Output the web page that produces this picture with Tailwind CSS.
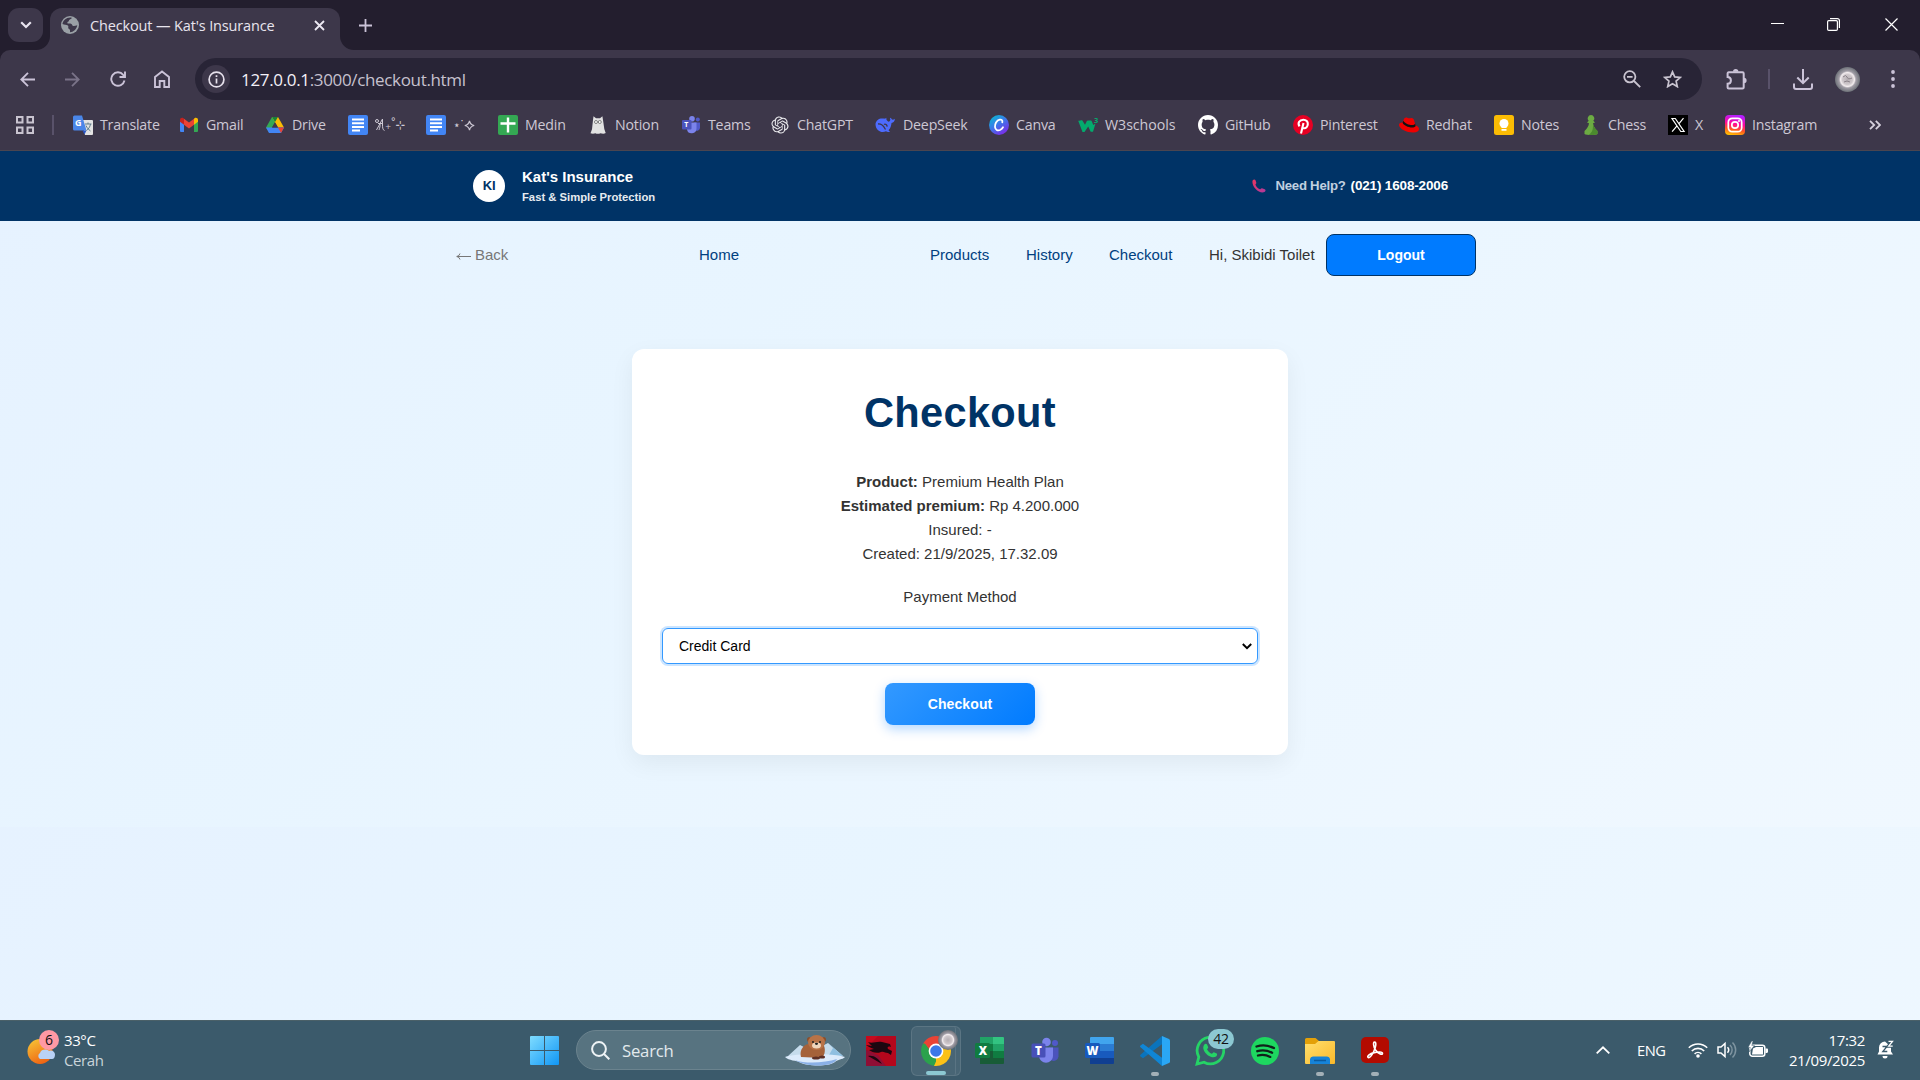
<!DOCTYPE html>
<html lang="en">
<head>
<meta charset="utf-8">
<title>Checkout — Kat's Insurance</title>
<script src="https://cdn.jsdelivr.net/npm/@tailwindcss/browser@4"></script>
</head>
<body class="w-[1920px] h-[1080px] overflow-hidden flex flex-col bg-[#231e2e] font-['Open_Sans',sans-serif]">

<!-- Tab strip -->
<div class="h-[50px] shrink-0 flex items-start pt-2 pl-2">
  <div class="w-[35px] h-[34px] rounded-[11px] bg-[#3d374a] flex items-center justify-center">
    <svg class="w-[12px] h-[8px]" viewBox="0 0 12 8" fill="none" stroke="#e9e4f0" stroke-width="2.2"><path d="M1.2 1.2 6 6l4.8-4.8"/></svg>
  </div>
  <div class="relative ml-[7px] w-[290px] h-[42px] rounded-t-[12px] bg-[#3d374a] flex items-center pb-2 pl-[11px]">
    <svg class="absolute -left-[14px] bottom-0 w-[14px] h-[14px]" viewBox="0 0 14 14"><path d="M14 0v14H0A14 14 0 0 0 14 0Z" fill="#3d374a"/></svg>
    <svg class="absolute -right-[14px] bottom-0 w-[14px] h-[14px]" viewBox="0 0 14 14"><path d="M0 0v14h14A14 14 0 0 1 0 0Z" fill="#3d374a"/></svg>
    <svg class="w-[18px] h-[18px] shrink-0" viewBox="0 0 18 18"><circle cx="9" cy="9" r="9" fill="#9aa0a6"/><path d="M10.500 1.600c.5 1.300-.8 1.900-1.900 2.100-.9.200-.3 1.500-1.200 1.900-.7.300-1.200.8-.9 1.600.3.700 2.700 0 3.900.7 1 .5.700 1.900 2 2.100 1 .2 2.300-.3 3.900-.7-.7 4.300-4 6.700-7.300 7v-2.200c0-1-1.400-.9-1.700-1.900-.3-1.300.5-2-.5-2.800C5.500 8.600 3.200 8.800 1.500 7.900 2 4.500 5.500 1 10.500 1.600Z" fill="#3d374a"/><path d="M9.400 3.800c1.600.3 3.400.6 3.500 2.200.1 1.200 1.700 1 2.900 1.300" stroke="#9aa0a6" stroke-width="1" fill="none"/></svg>
    <span class="ml-[11px] pt-px w-[222px] text-[14.500px] tracking-[-0.140px] text-[#e8e4ee] whitespace-nowrap">Checkout — Kat's Insurance</span>
    <svg class="w-[11px] h-[11px] shrink-0 ml-[2px]" viewBox="0 0 11 11" stroke="#ece8f2" stroke-width="1.800"><path d="m1 1 9 9M10 1l-9 9"/></svg>
  </div>
  <svg class="w-[13px] h-[13px] mt-[10.500px] ml-[19px]" viewBox="0 0 13 13" stroke="#cbc3d8" stroke-width="1.800"><path d="M6.500 0v13M0 6.500h13"/></svg>
  <div class="ml-auto flex items-center h-[33px]">
    <svg class="w-[13px] h-[13px]" viewBox="0 0 13 13"><path d="M0 5.500h13" stroke="#fff"/></svg>
    <svg class="w-[13px] h-[13px] ml-[43px]" viewBox="0 0 13 13" fill="none" stroke="#fff" stroke-width="1.200"><rect x=".6" y="2.600" width="9.800" height="9.800" rx="1.200"/><path d="M3 .6h7.400a2 2 0 0 1 2 2V10"/></svg>
    <svg class="w-[13px] h-[13px] ml-[45px] mr-[22px]" viewBox="0 0 13 13" stroke="#fff" stroke-width="1.200"><path d="m.5.500 12 12M12.500.500l-12 12"/></svg>
  </div>
</div>

<!-- Toolbar -->
<div class="h-[101px] shrink-0 bg-[#3d374a] rounded-t-[10px] border-b border-[#4a4550] flex flex-col">
  <div class="h-[58px] flex items-center text-[#cbc3d8] pl-5">
    <svg class="w-[15px] h-[15px]" viewBox="0 0 15 15" fill="none" stroke="currentColor" stroke-width="1.800"><path d="M15 7.500H1.500M8 .8 1.300 7.500 8 14.200"/></svg>
    <svg class="w-[15px] h-[15px] ml-[30px] text-[#7a7388]" viewBox="0 0 15 15" fill="none" stroke="currentColor" stroke-width="1.800"><path d="M0 7.500h13.500M7 .8l6.700 6.700L7 14.200"/></svg>
    <svg class="w-[16px] h-[16px] ml-[30px]" viewBox="0 0 16 16" fill="none" stroke="currentColor" stroke-width="1.900"><path d="M14.500 9.500A6.700 6.700 0 1 1 13.200 3.800L14.800 5.500M15 .5v5.500H9.500"/></svg>
    <svg class="w-[16px] h-[18px] ml-[28px]" viewBox="0 0 16 18" fill="none" stroke="currentColor" stroke-width="1.900"><path d="M1 7 8 1.500 15 7v10h-4.700v-6H5.700v6H1Z"/></svg>
    <div class="ml-[25px] w-[1507px] h-[42px] rounded-full bg-[#282436] flex items-center pl-[7px]">
      <div class="w-7 h-7 rounded-full bg-[#3d374a] flex items-center justify-center">
        <svg class="w-[17px] h-[17px]" viewBox="0 0 17 17" fill="none" stroke="#e6e1ec" stroke-width="1.700"><circle cx="8.500" cy="8.500" r="7.400"/><path d="M8.500 7.500v5M8.500 4.300v1.800"/></svg>
      </div>
      <div class="ml-[11px] pt-px text-[17px] tracking-[-0.340px] text-[#c6c1ce]"><span class="text-[#f3f0f7]">127.0.0.1</span>:3000/checkout.html</div>
      <svg class="w-[18px] h-[18px] ml-auto" viewBox="0 0 18 18" fill="none" stroke="#c9c4d0" stroke-width="1.800"><circle cx="6.800" cy="6.800" r="5.600"/><path d="m11 11 6.200 6.200M4 6.800h5.600"/></svg>
      <svg class="w-[19px] h-[18px] ml-[22px] mr-[20px]" viewBox="0 0 19 18" fill="none" stroke="#c9c4d0" stroke-width="1.700"><path d="m9.500 1.800 2.200 5.100 5.600.5-4.200 3.700 1.200 5.500-4.800-2.900-4.800 2.900 1.200-5.500L1.700 7.400l5.600-.5Z"/></svg>
    </div>
    <svg class="w-[21px] h-[21px] ml-[24px]" viewBox="0 0 21 21" fill="none" stroke="currentColor" stroke-width="2"><path d="M3.500 3.200h13c.8 0 1.200.5 1.200 1.200v14c0 .7-.5 1.100-1.200 1.100H2.700c-.7 0-1.100-.4-1.100-1.100v-3.700c4.400-.2 4.400-6.400 0-6.600V4.400c0-.7.400-1.200 1.100-1.200Z"/><path d="M7 2.800a2.700 2.700 0 0 1 5.400 0ZM18 8.800a2.600 2.600 0 0 1 0 5.200Z" fill="currentColor" stroke="none"/></svg>
    <div class="w-[2px] h-5 bg-[#59526a] ml-[21px]"></div>
    <svg class="w-[20px] h-[21px] ml-[23px]" viewBox="0 0 20 21" fill="none" stroke="currentColor" stroke-width="2"><path d="M10 0v13.500M4.300 8.500l5.700 5.700 5.700-5.700M1 14.500V18c0 1.200.8 2 2 2h14c1.200 0 2-.8 2-2v-3.500"/></svg>
    <svg class="w-[25px] h-[25px] ml-[22px]" viewBox="0 0 25 25"><defs><radialGradient id="moon"><stop offset="0" stop-color="#b5aeb3"/><stop offset=".4" stop-color="#cfc8cc"/><stop offset=".56" stop-color="#f3edef"/><stop offset=".68" stop-color="#a19da6"/><stop offset="1" stop-color="#6d7178"/></radialGradient></defs><circle cx="12.500" cy="12.500" r="12.500" fill="url(#moon)"/><path d="M8 10q3-3 4 0t5 1M9 15q3-2 6 0" stroke="#8b8289" fill="none"/></svg>
    <svg class="w-[4px] h-[18px] ml-[31px]" viewBox="0 0 4 18" fill="currentColor"><circle cx="2" cy="2" r="1.900"/><circle cx="2" cy="9" r="1.900"/><circle cx="2" cy="16" r="1.900"/></svg>
  </div>

  <!-- Bookmarks -->
  <div class="h-[34px] flex items-center text-[14.200px] tracking-[-0.200px] text-[#cdc8d4] whitespace-nowrap pl-[16px]">
    <svg class="w-[18px] h-[18px] mr-[18px] shrink-0" viewBox="0 0 18 18" fill="none" stroke="#c9c4d0" stroke-width="2"><path d="M1 1h5.500v5.500H1zM11.500 1H17v5.500h-5.500zM1 11.500h5.500V17H1zM11.500 11.500H17V17h-5.500z"/></svg>
    <div class="w-[2px] h-5 bg-[#59526a] mr-[19px] shrink-0"></div>
    <div class="w-[106px] shrink-0 flex items-center gap-[7px]"><svg class="w-5 h-5" viewBox="0 0 20 20"><path d="M8 5h11a1 1 0 0 1 1 1v13a1 1 0 0 1-1 1h-7Z" fill="#e3e3e3"/><path d="M1.500.500H9l4.500 15h-12A1.500 1.500 0 0 1 0 14V2A1.500 1.500 0 0 1 1.500.500Z" fill="#4a86e8"/><path d="m9.500 15.500 4 0-2 4Z" fill="#2a56c6"/><text x="2" y="11" font-size="9" font-weight="700" fill="#fff">G</text><path d="M12 9h6.500M15 7.500V9m2.500 0c-.5 3-2 5-4 6.500m-.5-5c1 2.500 2.500 4 4.500 5.500" stroke="#607d8b" fill="none"/></svg>Translate</div>
    <div class="w-[86px] shrink-0 flex items-center gap-[7px]"><svg class="w-5 h-5" viewBox="0 0 20 20"><path d="M1 5v11a1 1 0 0 0 1 1h3V7Z" fill="#4285f4"/><path d="M15 7v10h3a1 1 0 0 0 1-1V5Z" fill="#34a853"/><path d="M1 5c0-2 2-2.800 3.500-1.700L5 3.700v6L1 6.700Z" fill="#c5221f"/><path d="M19 5c0-2-2-2.800-3.500-1.700l-.5.400v6l4-3Z" fill="#fbbc04"/><path d="m5 3.700 5 3.800 5-3.800v6l-5 3.800-5-3.800Z" fill="#ea4335"/></svg>Gmail</div>
    <div class="w-[83px] shrink-0 flex items-center gap-[7px]"><svg class="w-5 h-5" viewBox="0 0 20 20"><path d="M7 2h6L4.200 17.500 1 12.500Z" fill="#34a853"/><path d="M7 2h6l6 10.500h-6Z" fill="#fbbc04"/><path d="M7 2 10 7l3-5Z" fill="#188038"/><path d="M1 12.500h18L16 18H4Z" fill="#4285f4"/><path d="M13 12.500h6L16 18Z" fill="#ea4335"/><path d="m10 7.500 3 5H7Z" fill="#3d374a"/></svg>Drive</div>
    <div class="w-[78px] shrink-0 flex items-center gap-[7px]"><svg class="w-5 h-5" viewBox="0 0 20 20"><rect width="20" height="20" rx="2" fill="#4285f4"/><path d="M4 4.500h12M4 8.300h12M4 12h12M4 15.500h8" stroke="#fff" stroke-width="2"/></svg><span class="flex items-center"><svg class="w-[10px] h-[14px]" viewBox="0 0 10 14" fill="none" stroke="currentColor" stroke-width="1"><circle cx="2" cy="3" r="1.500"/><path d="M7.500 1 1.500 12M3 5.500h4.500M7.500 1v5c0 3 0 6 2 6.500M5 6c.5 2-.5 4-1 6"/></svg><span class="font-['DejaVu_Sans'] text-[12px] tracking-[-1px]">₊˚⊹</span></span></div>
    <div class="w-[72px] shrink-0 flex items-center gap-[7px]"><svg class="w-5 h-5" viewBox="0 0 20 20"><rect width="20" height="20" rx="2" fill="#4285f4"/><path d="M4 4.500h12M4 8.300h12M4 12h12M4 15.500h8" stroke="#fff" stroke-width="2"/></svg><span class="flex items-center font-['DejaVu_Sans'] text-[12px] tracking-[-1.500px]">⋆˙<svg class="w-[11px] h-[11px]" viewBox="0 0 11 11" fill="none" stroke="currentColor" stroke-width="1.200"><path d="M5.500.8C6 3.500 7.500 5 10.200 5.500 7.500 6 6 7.500 5.500 10.200 5 7.500 3.500 6 .8 5.500 3.500 5 5 3.500 5.500.8Z"/></svg></span></div>
    <div class="w-[90px] shrink-0 flex items-center gap-[7px]"><svg class="w-5 h-5" viewBox="0 0 20 20"><rect width="20" height="20" rx="2" fill="#34a853"/><path d="M10 2.500v15M2.500 8.500h15" stroke="#fff" stroke-width="2.400"/></svg>Medin</div>
    <div class="w-[93px] shrink-0 flex items-center gap-[7px]"><svg class="w-5 h-5" viewBox="0 0 20 20"><path d="M5 5 5.500 1.300l2.500 1.900h4l2.400-2L15 5l1.300 9 1.400 4c-2 1.300-4 .5-5.200.2-2 .8-4 .6-5 0-1.800.7-3.700.6-5 0l1.500-4Z" fill="#e2e2e2"/><circle cx="8" cy="7" r="1.500" fill="#fff" stroke="#666" stroke-width=".8"/><circle cx="11.800" cy="7" r="1.500" fill="#fff" stroke="#666" stroke-width=".8"/></svg>Notion</div>
    <div class="w-[89px] shrink-0 flex items-center gap-[7px]"><svg class="w-5 h-5" viewBox="0 0 20 20"><circle cx="11" cy="3.800" r="2.800" fill="#7b83eb"/><circle cx="16.800" cy="4.500" r="2" fill="#5059c9"/><path d="M13 7.500h6v5.500a3 3 0 0 1-5 2Z" fill="#5059c9"/><path d="M6 7.500h9.500v6a4.800 4.800 0 0 1-9.500 1Z" fill="#7b83eb"/><rect x="1" y="5" width="9.500" height="9.500" rx="1" fill="#4b53bc"/><text x="3.200" y="12.300" font-size="7" font-weight="700" fill="#fff">T</text></svg>Teams</div>
    <div class="w-[105px] shrink-0 flex items-center gap-[7px]"><svg class="w-5 h-5" viewBox="-2 -2 28 28" fill="#e9e9ec"><path d="M22.2819 9.8211a5.9847 5.9847 0 0 0-.5157-4.9108 6.0462 6.0462 0 0 0-6.5098-2.9A6.0651 6.0651 0 0 0 4.9807 4.1818a5.9847 5.9847 0 0 0-3.9977 2.9 6.0462 6.0462 0 0 0 .7427 7.0966 5.98 5.98 0 0 0 .511 4.9107 6.051 6.051 0 0 0 6.5146 2.9001A5.9847 5.9847 0 0 0 13.2599 24a6.0557 6.0557 0 0 0 5.7718-4.2058 5.9894 5.9894 0 0 0 3.9977-2.9001 6.0557 6.0557 0 0 0-.7475-7.0729zm-9.022 12.6081a4.4755 4.4755 0 0 1-2.8764-1.0408l.1419-.0804 4.7783-2.7582a.7948.7948 0 0 0 .3927-.6813v-6.7369l2.02 1.1686a.071.071 0 0 1 .038.052v5.5826a4.504 4.504 0 0 1-4.4945 4.4944zm-9.6607-4.1254a4.4708 4.4708 0 0 1-.5346-3.0137l.142.0852 4.783 2.7582a.7712.7712 0 0 0 .7806 0l5.8428-3.3685v2.3324a.0804.0804 0 0 1-.0332.0615L9.74 19.9502a4.4992 4.4992 0 0 1-6.1408-1.6464zM2.3408 7.8956a4.485 4.485 0 0 1 2.3655-1.9728V11.6a.7664.7664 0 0 0 .3879.6765l5.8144 3.3543-2.0201 1.1685a.0757.0757 0 0 1-.071 0l-4.8303-2.7865A4.504 4.504 0 0 1 2.3408 7.872zm16.5963 3.8558L13.1038 8.364 15.1192 7.2a.0757.0757 0 0 1 .071 0l4.8303 2.7913a4.4944 4.4944 0 0 1-.6765 8.1042v-5.6772a.79.79 0 0 0-.407-.667zm2.0107-3.0231l-.142-.0852-4.7735-2.7818a.7759.7759 0 0 0-.7854 0L9.409 9.2297V6.8974a.0662.0662 0 0 1 .0284-.0615l4.8303-2.7866a4.4992 4.4992 0 0 1 6.6802 4.66zM8.3065 12.863l-2.02-1.1638a.0804.0804 0 0 1-.038-.0567V6.0742a4.4992 4.4992 0 0 1 7.3757-3.4537l-.142.0805L8.704 5.459a.7948.7948 0 0 0-.3927.6813zm1.0976-2.3654l2.602-1.4998 2.6069 1.4998v2.9994l-2.5974 1.4997-2.6067-1.4997Z"/></svg>ChatGPT</div>
    <div class="w-[114px] shrink-0 flex items-center gap-[8px]"><svg class="w-5 h-5" viewBox="0 0 20 20"><path d="M.5 9C1 5 4.500 3 8 3.500c1.500.3 2 .2 3.500-.7-.5 1.500 0 2.200 1 3.200 1 .9 2 1 2.700-.8.3-1-.2-1.600-.2-2.500 1 .2 1.700 1 2 1.900.9.300 1.800 0 2.900-.8-.2 2.600-1.400 4-3.400 4.200-.3 3-1 5.200-3 7.200l1.500 1.500c-1.500.6-3 .3-4-.4C6.500 18.500.5 15.500.5 9Z" fill="#4d6bfe"/><path d="M3 9c4.500-.5 6 3 7.500 5.500M9 9.500c1.500-1 3 .5 3.200 2.200" stroke="#3d374a" stroke-width="1.300" fill="none"/></svg>DeepSeek</div>
    <div class="w-[89px] shrink-0 flex items-center gap-[7px]"><svg class="w-5 h-5" viewBox="0 0 20 20"><defs><linearGradient id="cv" x2=".7" y2="1"><stop stop-color="#00c4cc"/><stop offset=".5" stop-color="#3a7bea"/><stop offset="1" stop-color="#7d2ae8"/></linearGradient></defs><circle cx="10" cy="10" r="10" fill="url(#cv)"/><path d="M13.300 7.300c.5-2-.8-3-2.500-2.700C7.500 5.300 5.700 9 6 12c.3 2.800 2.600 4 5 3 1.300-.6 2.300-1.500 3-2.800" fill="none" stroke="#fff" stroke-width="1.800" stroke-linecap="round"/></svg>Canva</div>
    <div class="w-[120px] shrink-0 flex items-center gap-[7px] tracking-[-0.040px]"><svg class="w-5 h-5" viewBox="0 0 20 20"><path d="M.2 5.800c1.500 0 2.500-.5 4-.5l2.800 4.500 2-4c2 0 3-.5 4.500 0l1.800 4.200 2.200-1.500-2.500 8.300h-2.300L10.200 11.500 6.500 17H4.500Z" fill="#04aa6d"/><text x="16" y="7.500" font-size="7.500" font-weight="700" fill="#04aa6d">3</text></svg>W3schools</div>
    <div class="w-[95px] shrink-0 flex items-center gap-[7px]"><svg class="w-5 h-5" viewBox="0 0 16 16" fill="#fff"><path d="M8 0C3.580 0 0 3.580 0 8c0 3.540 2.290 6.530 5.470 7.590.4.070.55-.17.55-.38 0-.19-.01-.82-.01-1.490-2.010.37-2.530-.49-2.690-.94-.09-.23-.48-.94-.82-1.130-.28-.15-.68-.52-.01-.53.63-.01 1.080.58 1.230.82.72 1.210 1.870.87 2.330.66.070-.52.28-.87.51-1.070-1.780-.2-3.640-.89-3.640-3.950 0-.87.31-1.590.82-2.150-.08-.2-.36-1.020.08-2.120 0 0 .67-.21 2.200.82.640-.18 1.320-.27 2-.27s1.360.09 2 .27c1.530-1.040 2.200-.82 2.200-.82.44 1.100.16 1.920.08 2.120.51.56.82 1.270.82 2.150 0 3.070-1.870 3.750-3.650 3.950.29.25.54.73.54 1.480 0 1.070-.01 1.930-.01 2.200 0 .21.15.46.55.38A8.010 8.010 0 0 0 16 8c0-4.420-3.580-8-8-8Z"/></svg>GitHub</div>
    <div class="w-[106px] shrink-0 flex items-center gap-[7px]"><svg class="w-5 h-5" viewBox="0 0 20 20"><circle cx="10" cy="10" r="10" fill="#e60023"/><path d="M8 18.500 10.500 8M6.500 11.300C4.300 8 6.500 4.700 10.300 4.700c3 0 4.700 2 4.500 4.400-.2 2.600-2 4.200-3.700 4.100-1 0-1.700-.5-1.900-1.200" fill="none" stroke="#fff" stroke-width="2.100"/></svg>Pinterest</div>
    <div class="w-[95px] shrink-0 flex items-center gap-[7px]"><svg class="w-5 h-5" viewBox="0 0 20 20"><path d="M3.500 7.500C1 7.700 0 8.500 0 10c.3 4 8 7.500 14 7.500 4 0 6-1.300 6-3.500 0-1.600-1.600-2.900-3.500-3.500L15 5c-.4-1.300-1.300-2-2.500-2-1 0-1.500.3-2.500.3-1 0-1.700-.8-2.800-.8-1.300 0-2 .8-2.400 2Z" fill="#e00"/><path d="M3.600 7.700c1 3.600 10.500 6.500 13 3.500l-.4-2.400c-1.500 2.700-9.500 1-11.900-3Z" fill="#111"/></svg>Redhat</div>
    <div class="w-[87px] shrink-0 flex items-center gap-[7px]"><svg class="w-5 h-5" viewBox="0 0 20 20"><rect width="20" height="20" rx="2.500" fill="#fbbc04"/><circle cx="10" cy="8.500" r="4.500" fill="#fff"/><path d="M7.500 11h5v2h-5zM7.500 14h5v1.800h-5z" fill="#fff"/></svg>Notes</div>
    <div class="w-[87px] shrink-0 flex items-center gap-[7px]"><svg class="w-5 h-5" viewBox="0 0 20 20"><path d="M10 0a3.400 3.400 0 0 1 2.300 5.800l1.700 1.700-2 .8c.3 3 1.500 4.700 4.500 7.700v3c-2 1.300-11 1.300-13 0v-3c3-3 4.200-4.700 4.500-7.700l-2-.8 1.700-1.700A3.400 3.400 0 0 1 10 0Z" fill="#6cab43"/><path d="M12 8.300c.3 3 1.500 4.700 4.500 7.700v3c-2 1-6 1.200-9 .8 5-2.800 4.500-8 4.500-11.500Z" fill="#4b8a2e"/></svg>Chess</div>
    <div class="w-[57px] shrink-0 flex items-center gap-[7px]"><svg class="w-5 h-5" viewBox="0 0 20 20"><path d="M0 0h20v20H0z" fill="#000"/><path d="M4 3.500h3.300l8.800 13h-3.300ZM15.500 3.200 11 8.600M8.800 11.200l-4.700 5.500" fill="none" stroke="#fff" stroke-width="1.200"/></svg>X</div>
    <div class="w-[144px] shrink-0 flex items-center gap-[7px]"><svg class="w-5 h-5" viewBox="0 0 20 20"><defs><linearGradient id="ig" x1=".2" y1="1" x2=".4" y2="0"><stop stop-color="#ffc800"/><stop offset=".3" stop-color="#ff5a1e"/><stop offset=".6" stop-color="#ff0a9a"/><stop offset="1" stop-color="#b41eff"/></linearGradient></defs><rect width="20" height="20" rx="4" fill="url(#ig)"/><g fill="none" stroke="#fff" stroke-width="1.700"><rect x="3.300" y="3.300" width="13.400" height="13.400" rx="4"/><circle cx="10" cy="10" r="3.200"/></g><circle cx="14" cy="6" r="1" fill="#fff"/></svg>Instagram</div>
    <svg class="w-[12px] h-[10px]" viewBox="0 0 12 10" fill="none" stroke="#d6d1dd" stroke-width="1.800"><path d="m1 .8 4.200 4.200L1 9.200M6.800.8 11 5 6.800 9.200"/></svg>
  </div>
</div>

<!-- Web page -->
<main class="h-[869px] shrink-0 bg-[linear-gradient(135deg,#e6f2ff_0%,#e8f5ff_35%,#f0f8ff_100%)] bg-[length:100%_676px] font-['Liberation_Sans',Arial,sans-serif] text-[15px] text-[#333]">
  <header class="h-[70px] bg-[#003366] text-white font-bold flex items-center pl-[473px] pr-[472px]">
    <div class="w-8 h-8 rounded-full bg-white text-[#003366] text-[13px] tracking-[-0.300px] flex items-center justify-center">KI</div>
    <div class="ml-[17px] pt-px flex flex-col">
      <span class="text-[15px] leading-[21px]">Kat's Insurance</span>
      <span class="text-[11.250px] leading-[20px] text-[#e6ebf0]">Fast &amp; Simple Protection</span>
    </div>
    <div class="ml-auto flex items-center text-[13px]">
      <svg class="w-[14px] h-[14px] mr-[9px]" viewBox="0 0 14 14"><defs><linearGradient id="ph" x2="1" y2="1"><stop stop-color="#e8365f"/><stop offset="1" stop-color="#b03a9e"/></linearGradient></defs><path d="M.6 1.500C1.500.2 3 .1 3.500 1.300l.8 2.500c.2.900-1 1.300-.8 2 .8 2 2.300 3.600 4.300 4.500.8.300 1.200-1.200 2.200-1l2.700.9c1.300.5 1 2-.2 2.800C7.500 15.500-.9 7.500.6 1.500Z" fill="url(#ph)"/></svg>
      <span class="text-[#c0d0e0] text-[13.200px] tracking-[-0.240px] mr-[5px]">Need Help?</span>
      <span class="text-[13.500px] tracking-[-0.160px]">(021) 1608-2006</span>
    </div>
  </header>
  <nav class="h-[68px] flex items-center pl-[456px] text-[#004080]">
    <span class="w-[243px] flex items-center text-[#777]"><svg class="w-[15px] h-[7px] mt-[3px] mr-[4px]" viewBox="0 0 15 7" fill="none" stroke="currentColor"><path d="M15 3.500H.8M4 .5Q3.500 3 .8 3.500 3.500 4 4 6.500"/></svg>Back</span>
    <span class="w-[231px]">Home</span>
    <span class="w-[96px]">Products</span>
    <span class="w-[83px]">History</span>
    <span class="w-[100px]">Checkout</span>
    <span class="w-[117px] text-[#333]">Hi, Skibidi Toilet</span>
    <span class="w-[150px] h-[42px] rounded-lg border border-[#003366] bg-[#007bff] text-white font-bold text-[14px] flex items-center justify-center">Logout</span>
  </nav>
  <section class="mt-[60px] mx-auto w-[656px] h-[406px] rounded-xl bg-white shadow-[0_8px_24px_rgba(0,0,0,0.06)] flex flex-col items-center px-[30px]">
    <h1 class="mt-[40px] text-[41.600px] leading-[48px] font-bold text-[#003366] tracking-[0.300px]">Checkout</h1>
    <div class="mt-[33px] leading-6 text-center">
      <p><b>Product:</b> Premium Health Plan</p>
      <p><b>Estimated premium:</b> Rp 4.200.000</p>
      <p>Insured: -</p>
      <p>Created: 21/9/2025, 17.32.09</p>
    </div>
    <label class="mt-[19px] leading-6">Payment Method</label>
    <div class="mt-[19px] w-full h-9 shrink-0 rounded-md border border-[#3399ff] shadow-[0_0_0_2px_rgba(0,123,255,0.2)] flex items-center justify-between pl-4 pr-[5px] text-[14px] text-black">
      Credit Card
      <svg class="w-[10px] h-[7px]" viewBox="0 0 10 7" fill="none" stroke="#000" stroke-width="2"><path d="m.8 1 4.200 4.200L9.200 1"/></svg>
    </div>
    <button class="mt-[19px] pt-px w-[150px] h-[42px] shrink-0 rounded-lg bg-[linear-gradient(135deg,#3399ff,#007bff)] text-white font-bold text-[14px] tracking-[0.100px] shadow-[0_4px_12px_rgba(0,123,255,0.3)]">Checkout</button>
  </section>
</main>

<!-- Taskbar -->
<footer class="h-[60px] shrink-0 bg-[#3b5a6b] border-t border-[#4a6068] flex items-center text-white">
  <div class="w-[516px] shrink-0 flex items-center pl-[27px] -mt-[2px]">
    <svg class="w-[33px] h-[36px] -mt-[5px]" viewBox="0 0 33 36"><defs><linearGradient id="sun" x1=".2" y1="0" x2=".7" y2="1"><stop stop-color="#f6c235"/><stop offset="1" stop-color="#ef5f11"/></linearGradient></defs><circle cx="13" cy="22.500" r="12.500" fill="url(#sun)"/><path d="M13 30a3.500 3.500 0 0 1 0-6c1-4 7-4.500 9-2 3-1.500 6 1 6 3.500s-1 4.500-3 4.500Z" fill="#b9d2f6"/><circle cx="22" cy="11" r="10" fill="#ff99a4"/><text x="18" y="16" font-size="14" fill="#111">6</text></svg>
    <div class="ml-[4px] text-[15px] leading-[20px] tracking-[-0.400px]"><div>33°C</div><div class="text-[#c9d4da]">Cerah</div></div>
  </div>
  <div class="flex items-center shrink-0">
    <svg class="w-[29px] h-[29px] ml-[14px]" viewBox="0 0 29 29"><defs><linearGradient id="wn" x2="1" y2="1"><stop stop-color="#7fdcff"/><stop offset="1" stop-color="#1096f5"/></linearGradient></defs><path d="M1 0h13v14H0V1a1 1 0 0 1 1-1ZM15 0h13a1 1 0 0 1 1 1v13H15ZM0 15h14v14H1a1 1 0 0 1-1-1ZM15 15h14v13a1 1 0 0 1-1 1H15Z" fill="url(#wn)"/></svg>
    <div class="ml-[17px] -mt-px w-[275px] h-10 rounded-full bg-[#577380] border border-[#6b838e] flex items-center pl-[14px] pr-[5px]">
      <svg class="w-[19px] h-[19px]" viewBox="0 0 19 19" fill="none" stroke="#eef3f5" stroke-width="2"><circle cx="8" cy="8" r="6.900"/><path d="m13 13 5.300 5.300"/></svg>
      <span class="ml-[12px] pt-[2px] text-[16.700px] tracking-[-0.200px] text-[#e3eaed]">Search</span>
      <svg class="w-[60px] h-[32px] ml-auto" viewBox="0 0 60 32"><path d="m3 22 12-11 6 3 3 8ZM37 12l6-3 15 13H36Z" fill="#c6dcec"/><path d="m43 9 5 5-4 7 14 1Z" fill="#8fbfe0"/><path d="M0 23c10-4 48-4 60 0-3 3-7 2-10 5-6 5-28 4-34 1-5-3-12-2-16-6Z" fill="#dcebfb"/><path d="M10 26c10 4 30 3 42-1-4 9-32 8-42 1Z" fill="#8ab0e6"/><path d="M16 23c-2-7 3-13 8-13h14c3 4 2 11-1 14Z" fill="#a5623a"/><circle cx="24.500" cy="5.500" r="2.500" fill="#8b4f2c"/><circle cx="38.500" cy="5.500" r="2.500" fill="#8b4f2c"/><ellipse cx="31.500" cy="8.500" rx="8.500" ry="7.500" fill="#b97347"/><ellipse cx="31.500" cy="11.500" rx="4.500" ry="3" fill="#efd6bd"/><circle cx="28" cy="8" r="1" fill="#222"/><circle cx="35" cy="8" r="1" fill="#222"/><ellipse cx="31.500" cy="9.800" rx="1.600" ry="1.100" fill="#222"/><ellipse cx="31" cy="24" rx="4" ry="1.500" fill="#5e3026"/><ellipse cx="37" cy="23" rx="3" ry="1.500" fill="#5e3026"/></svg>
    </div>
    <div class="w-[55px] ml-[2px] flex justify-center">
      <svg class="w-[30px] h-[30px]" viewBox="0 0 30 30"><path d="M0 0h30v30H0z" fill="#b5071c"/><path d="M0 0h12L0 12Z" fill="#c80a1e"/><path d="M0 14c6 1 8 4 12 5l8 11H0Z" fill="#8f0f35"/><path d="M2 6c5 2 8-1 14 0l8 2 1 3c-3-1-4 0-3 2l4 2-1 4-3-2c-3 0-4-2-7-1-5 2-9 0-12-2l5-1c-4-1-6-3-8-4l6 1c-2-2-3-3-4-4ZM2 20c6-1 10 2 14 8-5-3-9-5-14-8Z" fill="#1c0710"/></svg>
    </div>
    <div class="relative w-[50px] h-[50px] ml-[3px] rounded-md bg-white/7 border border-white/10 flex justify-center items-center">
      <div class="absolute top-0 right-[4px] w-[2px] h-full border-r border-white/10 rounded-r-md"></div>
      <svg class="w-[30px] h-[30px]" viewBox="0 0 30 30"><path d="M15 15 2.010 7.500A15 15 0 0 1 27.990 7.500Z" fill="#ea4335"/><path d="M15 15 27.990 7.500A15 15 0 0 1 15 30Z" fill="#fbc116"/><path d="M15 15v15A15 15 0 0 1 2.010 7.500Z" fill="#2ba24c"/><path d="M15 8h13.300L15 8ZM21 18.500 15 30h-2l4-9Z" fill="#fbc116"/><path d="M9 18.500 2 7.500 15 8Z" fill="#2ba24c"/><path d="M3 6.200 9.500 15 15 8h13.200L22 3H8Z" fill="#ea4335"/><circle cx="15" cy="15" r="7.400" fill="#fff"/><circle cx="15" cy="15" r="5.800" fill="#3b78e7"/></svg>
      <svg class="absolute left-[26px] top-[3px] w-5 h-5" viewBox="0 0 25 25"><circle cx="12.500" cy="12.500" r="12.500" fill="url(#moon)"/></svg>
      <div class="absolute bottom-0 left-[14px] w-5 h-1 rounded-full bg-[#8cc8d2]"></div>
    </div>
    <div class="w-[55px] ml-px flex justify-center">
      <svg class="w-[30px] h-[30px]" viewBox="0 0 30 30"><path d="M5 1h13v7H5z" fill="#21a366"/><path d="M18 1h10a1 1 0 0 1 1 1v6H18z" fill="#33c481"/><path d="M5 8h13v7H5z" fill="#107c41"/><path d="M18 8h11v7H18z" fill="#21a366"/><path d="M5 15h13v7H5z" fill="#185c37"/><path d="M18 15h11v7H18z" fill="#107c41"/><path d="M5 22h24v5a1 1 0 0 1-1 1H5z" fill="#185c37"/><rect y="7" width="15" height="15" rx="1.500" fill="#107c41"/><text x="3.700" y="18.800" font-size="11.500" font-weight="800" fill="#fff">X</text></svg>
    </div>
    <div class="w-[55px] flex justify-center">
      <svg class="w-[30px] h-[30px]" viewBox="0 0 30 30"><circle cx="16.500" cy="6" r="4.300" fill="#7b83eb"/><circle cx="25" cy="7" r="3" fill="#5059c9"/><path d="M19 11.500h9.500v9a5 5 0 0 1-7 4Z" fill="#4b53bc"/><path d="M9 11.500h14v8c0 9.500-14 9.500-14 0Z" fill="#7b83eb"/><rect x="1.500" y="7.500" width="14" height="14" rx="1.500" fill="#4850b8"/><text x="5" y="18.600" font-size="11.500" font-weight="800" fill="#fff">T</text></svg>
    </div>
    <div class="w-[55px] flex justify-center">
      <svg class="w-[30px] h-[30px]" viewBox="0 0 30 30"><path d="M5 8V2a1 1 0 0 1 1-1h22a1 1 0 0 1 1 1v6z" fill="#41a5ee"/><path d="M5 8h24v7H5z" fill="#2b7cd3"/><path d="M5 15h24v7H5z" fill="#185abd"/><path d="M5 22h24v5a1 1 0 0 1-1 1H5z" fill="#103f91"/><rect y="7" width="15" height="15" rx="1.500" fill="#185abd"/><text x="1.500" y="18.800" font-size="11.500" font-weight="800" fill="#fff">W</text></svg>
    </div>
    <div class="relative w-[55px] h-[50px] flex justify-center items-center">
      <svg class="w-[30px] h-[30px]" viewBox="0 0 30 30"><path d="M23 7.500 3 22.200.5 20.500c-.6-.5-.6-1.300 0-1.800L22 0Z" fill="#0a74bd"/><path d="M23 22.500 3 7.800.5 9.500c-.6.500-.6 1.300 0 1.800L22 30Z" fill="#0f86d6"/><path d="m22 0 7 3c.7.400 1 1 1 1.600v20.800c0 .7-.3 1.300-1 1.600l-7 3Z" fill="#2aa7f5"/></svg>
      <div class="absolute bottom-0 w-2 h-1 rounded-full bg-[#a3b0b7]"></div>
    </div>
    <div class="relative w-[55px] h-[50px] flex justify-center items-center">
      <svg class="w-[30px] h-[30px]" viewBox="0 0 30 30"><path d="M2 28 3.800 21A13.300 13.300 0 1 1 9 26.200Z" fill="none" stroke="#25d366" stroke-width="2.800"/><path d="M9 9c1-1.700 2.700-1.500 3.200-.2l1 2.500c.2.700-1.300 1.700-1.100 2.300 1 2 2.500 3.300 4.600 4.200.7.200 1.500-1.700 2.200-1.500l2.800 1.300c.8.500.4 2-.6 3C15.500 24 5.500 14.500 9 9Z" fill="#25d366"/></svg>
      <div class="absolute left-[26px] top-[3px] w-[26px] h-5 rounded-full bg-[#8cc8d2] text-[#111] text-[14px] tracking-[-0.300px] leading-5 text-center">42</div>
    </div>
    <div class="w-[55px] flex justify-center">
      <svg class="w-[28px] h-[28px]" viewBox="0 0 28 28"><circle cx="14" cy="14" r="14" fill="#1ed760"/><path d="M5.500 9.500c6-1.800 12-1.200 17.500 1.600M6.300 14.200c5-1.500 10-1 14.800 1.600M7 18.500c4-1.200 8-.9 12.300 1.400" fill="none" stroke="#10201a" stroke-width="2.300" stroke-linecap="round"/></svg>
    </div>
    <div class="relative w-[55px] h-[50px] flex justify-center items-center">
      <svg class="w-[30px] h-[30px]" viewBox="0 0 30 30"><defs><linearGradient id="fd" x2="1" y2="1"><stop stop-color="#ffdf6e"/><stop offset="1" stop-color="#fbb92a"/></linearGradient></defs><path d="M0 3.500A1.500 1.500 0 0 1 1.500 2h9L14 5v5H0Z" fill="#e3a008"/><path d="M0 8h10l3.500-3H29a1 1 0 0 1 1 1v21a1 1 0 0 1-1 1H1a1 1 0 0 1-1-1Z" fill="url(#fd)"/><path d="M5 28v-5a3 3 0 0 1 3-2.500h14a3 3 0 0 1 3 2.500v5Z" fill="#1683d8"/><path d="M9 24.500h12" stroke="#0b5a9e" stroke-width="1.500"/></svg>
      <div class="absolute bottom-0 w-2 h-1 rounded-full bg-[#a3b0b7]"></div>
    </div>
    <div class="relative w-[55px] h-[50px] flex justify-center items-center">
      <svg class="w-[28px] h-[28px] -mt-[2px]" viewBox="0 0 28 28"><rect y="1" width="28" height="26" rx="5" fill="#b30b00"/><path d="M13.500 6c2.200 0 1.500 5-1 10-1.800 3.600-4 6-5.300 5.500-1.700-.8 1.200-3.800 6-4.900 4-1 8.300-1 8.300.8 0 2.200-4.800 0-7-3.400C12.300 10.500 12 6 13.500 6Z" fill="none" stroke="#fff" stroke-width="1.600"/></svg>
      <div class="absolute bottom-0 w-2 h-1 rounded-full bg-[#a3b0b7]"></div>
    </div>
  </div>
  <div class="ml-auto pr-[26px] -mt-[2px] flex items-center shrink-0 text-[15px]">
    <svg class="w-[14px] h-[8px]" viewBox="0 0 14 8" fill="none" stroke="#fff" stroke-width="1.800"><path d="m.7 7.300 6.300-6 6.300 6"/></svg>
    <span class="ml-[27px] pt-px w-[51px] text-[14.700px] tracking-[-0.500px]">ENG</span>
    <svg class="w-[20px] h-[16px]" viewBox="0 0 20 16" fill="none" stroke="#fff" stroke-width="1.600"><path d="M.8 5.800a13 13 0 0 1 18.400 0M3.800 9a8.700 8.700 0 0 1 12.400 0M6.600 11.800a5 5 0 0 1 6.800 0"/><circle cx="10" cy="14" r="1.800" fill="#fff" stroke="none"/></svg>
    <svg class="w-[20px] h-[18px] ml-[9px]" viewBox="0 0 20 18" fill="none" stroke="#fff" stroke-width="1.500"><path d="M1 6h3l4-3.500v13L4 12H1ZM10.500 6.300a4 4 0 0 1 0 5.400"/><path d="M13 4a7 7 0 0 1 0 10M15.500 1.500a10.500 10.500 0 0 1 0 15" stroke="#7e94a0"/></svg>
    <svg class="w-[20px] h-[17px] ml-[11px]" viewBox="0 0 20 17"><rect x="1.800" y="4.300" width="15" height="11" rx="2.500" fill="none" stroke="#fff" stroke-width="1.500"/><path d="M5 7.500 8 6h7v7.500H4Z" fill="#fff"/><path d="M17.500 7.500h1.300c.7 0 1.200.5 1.200 1.200v2.100c0 .7-.5 1.200-1.200 1.200h-1.300Z" fill="#fff"/><path d="M4-.5 0 6.500h2.300L1 11l5.500-6.500H3.800L5 0Z" fill="#fff" stroke="#3b5a6b" stroke-width=".5"/></svg>
    <div class="ml-[19px] w-[78px] flex flex-col items-end leading-[20px] tracking-[-0.350px] whitespace-nowrap"><div>17:32</div><div>21/09/2025</div></div>
    <svg class="w-[17px] h-[19px] ml-[12px]" viewBox="0 0 17 19"><path d="M8 1.500A6 6 0 0 0 2 7.500v4L.5 14.500h15.500L14 11.500V7Z" fill="#fff"/><path d="M5.500 16h5a2.500 2.500 0 0 1-5 0Z" fill="#fff"/><path d="M5.500 6.500h4.500L5.800 11.500h4.500" stroke="#3b5a6b" stroke-width="1.300" fill="none"/><path d="M11.500 1.300h4l-3.800 4.800h4" stroke="#3b5a6b" stroke-width="3.500" fill="none"/><path d="M11.500 1.300h4l-3.800 4.800h4" stroke="#fff" stroke-width="1.300" fill="none"/></svg>
  </div>
</footer>
</body>
</html>
